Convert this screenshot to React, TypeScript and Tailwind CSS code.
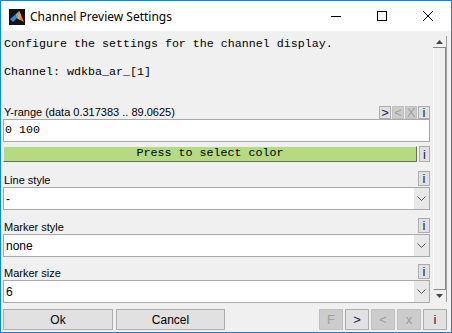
import React from "react";

const mono = { fontFamily: '"Liberation Mono", "Courier New", monospace' };
const sans = { fontFamily: '"Liberation Sans", Arial, sans-serif' };

function SmallBtn({ label, disabled }: { label: string; disabled?: boolean }) {
  return (
    <div
      className={
        "flex items-center justify-center border text-[12px] leading-none " +
        (disabled
          ? "bg-[#cccccc] border-[#bfbfbf] text-[#a0a0a0]"
          : "bg-[#e1e1e1] border-[#adadad] text-[#1a1a50]")
      }
      style={sans}
    >
      {label}
    </div>
  );
}

function Chevron() {
  return (
    <svg width="9" height="5" viewBox="0 0 9 5">
      <path d="M0.5 0.5 L4.5 4.5 L8.5 0.5" fill="none" stroke="#555" strokeWidth="1" />
    </svg>
  );
}

function Select({ value }: { value: string }) {
  return (
    <div className="flex h-[23px] border border-[#a9a9a9] bg-white">
      <div className="flex flex-1 items-center pl-[2px] text-[12px] text-black" style={sans}>
        {value}
      </div>
      <div className="flex w-[15px] items-center justify-center bg-[#e8e8e8]">
        <Chevron />
      </div>
    </div>
  );
}

function LabelRow({ label }: { label: string }) {
  return (
    <div className="flex h-[17px] items-center justify-between">
      <span className="pl-[1px] pt-[3px] text-[11px] text-black" style={sans}>
        {label}
      </span>
      <div className="flex h-[15px] w-[12px]">
        <div className="flex-1 flex">
          <SmallBtnFill label="i" />
        </div>
      </div>
    </div>
  );
}

function SmallBtnFill({ label, disabled }: { label: string; disabled?: boolean }) {
  return (
    <div
      className={
        "flex flex-1 items-center justify-center border text-[13px] leading-none " +
        (disabled
          ? "bg-[#cccccc] border-[#bfbfbf] text-[#a0a0a0]"
          : "bg-[#e1e1e1] border-[#adadad] text-[#1a1a50]")
      }
      style={sans}
    >
      {label}
    </div>
  );
}

function MatlabIcon() {
  return (
    <svg width="16" height="16" viewBox="0 0 16 16">
      <rect width="16" height="16" fill="#101418" />
      <polygon points="1,10 6,6 8,9 4,13" fill="#2a8fd0" />
      <polygon points="6,6 8,9 10,2" fill="#4fb3e8" />
      <polygon points="8,9 10,2 12,6 15,13 11,11" fill="#e8762b" />
      <polygon points="10,2 12,6 11,11 8,9" fill="#f4a03a" />
    </svg>
  );
}

export default function App() {
  return (
    <div className="flex h-[333px] w-[452px] flex-col border border-[#1883d7] bg-white">
      {/* Title bar */}
      <div className="flex h-[30px] items-center bg-white">
        <div className="ml-[8px] mt-[2px]">
          <MatlabIcon />
        </div>
        <span
          className="ml-[5px] mt-[1px] text-[12px] text-black"
          style={{ fontFamily: '"Noto Sans", "Open Sans", sans-serif' }}
        >
          Channel Preview Settings
        </span>
        <div className="ml-auto flex items-center">
          <div className="flex h-[30px] w-[46px] items-center justify-center">
            <svg width="10" height="10" viewBox="0 0 10 10">
              <line x1="0" y1="5.5" x2="10" y2="5.5" stroke="#000" strokeWidth="1" />
            </svg>
          </div>
          <div className="flex h-[30px] w-[46px] items-center justify-center">
            <svg width="10" height="10" viewBox="0 0 10 10">
              <rect x="0.5" y="0.5" width="9" height="9" fill="none" stroke="#000" strokeWidth="1" />
            </svg>
          </div>
          <div className="flex h-[30px] w-[46px] items-center justify-center">
            <svg width="10" height="10" viewBox="0 0 10 10">
              <path d="M0 0 L10 10 M10 0 L0 10" stroke="#000" strokeWidth="1" />
            </svg>
          </div>
        </div>
      </div>

      {/* Body */}
      <div className="flex flex-1 flex-col bg-[#f0f0f0] pl-[2px] pr-[4px]">
        <div className="flex">
          {/* Main content */}
          <div className="flex w-[427px] flex-col">
            <div className="mt-[6px] flex flex-col text-[11.67px] leading-[14px] text-black" style={mono}>
              <div className="pl-[1px]">Configure the settings for the channel display.</div>
              <div className="h-[14px]" />
              <div className="pl-[1px]">Channel: wdkba_ar_[1]</div>
            </div>

            {/* Y-range */}
            <div className="mt-[27px] flex h-[13px] items-end justify-between">
              <span className="pl-[1px] text-[11px] leading-[13px] text-black" style={sans}>
                Y-range (data 0.317383 .. 89.0625)
              </span>
              <div className="flex h-[13px] gap-[1px]">
                <div className="flex w-[12px]"><SmallBtnFill label=">" /></div>
                <div className="flex w-[12px]"><SmallBtnFill label="<" disabled /></div>
                <div className="flex w-[12px]"><SmallBtnFill label="X" disabled /></div>
                <div className="flex w-[12px]"><SmallBtnFill label="i" /></div>
              </div>
            </div>
            <div className="flex h-[23px] items-center border border-[#a9a9a9] bg-white pl-[1px] text-[11.67px] text-black" style={mono}>
              0 100
            </div>

            {/* Color */}
            <div className="mt-[4px] flex h-[16px] items-stretch gap-[2px]">
              <div
                className="flex flex-1 items-center justify-center border border-t-[#e8f4d8] border-l-[#e8f4d8] border-r-[#6a6a6a] border-b-[#6a6a6a] bg-[#b4db82] text-[11.67px] text-black"
                style={mono}
              >
                Press to select color
              </div>
              <div className="flex w-[11px]"><SmallBtnFill label="i" /></div>
            </div>

            <div className="mt-[8px]">
              <LabelRow label="Line style" />
            </div>
            <Select value="-" />

            <div className="mt-[7px]">
              <LabelRow label="Marker style" />
            </div>
            <Select value="none" />

            <div className="mt-[6px]">
              <LabelRow label="Marker size" />
            </div>
            <Select value="6" />
          </div>

          {/* Scrollbar */}
          <div className="ml-[3px] mt-[5px] mb-[1px] flex w-[14px] flex-col border-r border-[#a0a0a0] bg-[#f0f0f0]">
            <div className="flex h-[12px] items-center justify-center border-b border-[#888888]">
              <svg width="7" height="4" viewBox="0 0 7 4">
                <polygon points="3.5,0 7,4 0,4" fill="#444" />
              </svg>
            </div>
            <div className="flex-1 border-l border-white border-r border-r-[#888888] border-b border-b-[#888888] bg-[#f0f0f0]" />
            <div className="flex h-[12px] items-center justify-center">
              <svg width="7" height="4" viewBox="0 0 7 4">
                <polygon points="0,0 7,0 3.5,4" fill="#444" />
              </svg>
            </div>
          </div>
        </div>

        {/* Bottom buttons */}
        <div className="mt-[6px] flex h-[21px] items-stretch">
          <div className="flex w-[110px] items-center justify-center border border-[#adadad] bg-[#e1e1e1] text-[12px] text-black" style={sans}>
            Ok
          </div>
          <div className="ml-[3px] flex w-[109px] items-center justify-center border border-[#adadad] bg-[#e1e1e1] text-[12px] text-black" style={sans}>
            Cancel
          </div>
          <div className="ml-auto flex gap-[2px]">
            <div className="flex w-[24px]"><SmallBtnFill label="F" disabled /></div>
            <div className="flex w-[24px]"><SmallBtnFill label=">" /></div>
            <div className="flex w-[24px]"><SmallBtnFill label="<" disabled /></div>
            <div className="flex w-[24px]"><SmallBtnFill label="x" disabled /></div>
            <div className="flex w-[24px]"><SmallBtnFill label="i" /></div>
          </div>
        </div>
      </div>
    </div>
  );
}
